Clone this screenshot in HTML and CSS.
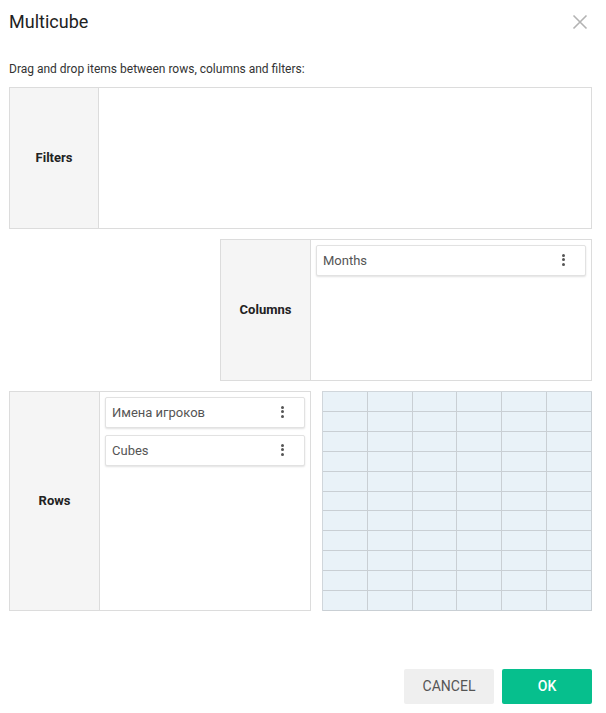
FILE: index.html
```html
<!DOCTYPE html>
<html>
<head>
<meta charset="utf-8">
<link rel="stylesheet" href="styles.css">
</head>
<body>
<div class="dialog">
  <div class="header">
    <h1 class="title">Multicube</h1>
    <svg class="close" width="16" height="16" viewBox="0 0 16 16"><path d="M1.5 1.5 L14.5 14.5 M14.5 1.5 L1.5 14.5" stroke="#b3b3b3" stroke-width="1.6" fill="none"/></svg>
  </div>
  <p class="hint">Drag and drop items between rows, columns and filters:</p>
  <div class="zone filters">
    <div class="label">Filters</div>
    <div class="items"></div>
  </div>
  <div class="mid">
    <div class="zone columns">
      <div class="label">Columns</div>
      <div class="items">
        <div class="chip"><span>Months</span><span class="dots"><i></i><i></i><i></i></span></div>
      </div>
    </div>
  </div>
  <div class="bottom">
    <div class="zone rows">
      <div class="label">Rows</div>
      <div class="items">
        <div class="chip"><span>Имена игроков</span><span class="dots"><i></i><i></i><i></i></span></div>
        <div class="chip"><span>Cubes</span><span class="dots"><i></i><i></i><i></i></span></div>
      </div>
    </div>
    <div class="grid">
      <div></div><div></div><div></div><div></div><div></div><div></div>
      <div></div><div></div><div></div><div></div><div></div><div></div>
      <div></div><div></div><div></div><div></div><div></div><div></div>
      <div></div><div></div><div></div><div></div><div></div><div></div>
      <div></div><div></div><div></div><div></div><div></div><div></div>
      <div></div><div></div><div></div><div></div><div></div><div></div>
      <div></div><div></div><div></div><div></div><div></div><div></div>
      <div></div><div></div><div></div><div></div><div></div><div></div>
      <div></div><div></div><div></div><div></div><div></div><div></div>
      <div></div><div></div><div></div><div></div><div></div><div></div>
      <div></div><div></div><div></div><div></div><div></div><div></div>
    </div>
  </div>
  <div class="footer">
    <button class="btn cancel">CANCEL</button>
    <button class="btn ok">OK</button>
  </div>
</div>
</body>
</html>
```
FILE: styles.css
```css
* { box-sizing: border-box; }
html, body { margin: 0; padding: 0; background: #fff; }
body { font-family: Roboto, "Noto Sans", sans-serif; color: #222; }
.dialog { width: 606px; height: 713px; padding: 0 14px 0 9px; position: relative; }
.header { display: flex; justify-content: space-between; align-items: center; height: 42px; padding-top: 1px; }
.title { margin: 0; font-size: 18px; font-weight: 400; color: #222; }
.close { margin-right: 4px; margin-top: 0; }
.hint { margin: 20px 0 0; font-size: 12px; line-height: 15px; color: #333; height: 25px; }
.zone { display: flex; border: 1px solid #dcdcdc; background: #fff; }
.label { width: 89px; flex: none; background: #f5f5f5; border-right: 1px solid #dcdcdc; display: flex; align-items: center; justify-content: center; font-size: 13px; font-weight: 700; color: #222; padding-bottom: 1px; }
.items { flex: 1; padding: 5px; display: flex; flex-direction: column; gap: 7px; }
.filters { height: 142px; }
.mid { display: flex; justify-content: flex-end; margin-top: 10px; }
.columns { width: 372px; height: 142px; }
.columns .label { width: 90px; }
.bottom { display: flex; justify-content: space-between; margin-top: 10px; }
.rows { width: 302px; height: 220px; }
.rows .label { width: 90px; }
.chip { height: 31px; border: 1px solid #e2e2e2; border-radius: 2px; box-shadow: 0 1px 2px rgba(0,0,0,0.12); display: flex; align-items: center; justify-content: space-between; padding: 0 20px 0 6px; font-size: 13px; color: #555; background: #fff; }
.chip span:first-child { margin-top: -1px; }
.dots { display: flex; flex-direction: column; gap: 1.5px; margin-top: -2px; }
.dots i { display: block; width: 3px; height: 3px; border-radius: 50%; background: #555; }
.grid { width: 270px; height: 220px; display: grid; grid-template-columns: repeat(6, 1fr); grid-template-rows: repeat(11, 1fr); background: #e9f2f8; border-left: 1px solid #d0d6db; border-top: 1px solid #d0d6db; }
.grid div { border-right: 1px solid #c9cfd4; border-bottom: 1px solid #c9cfd4; }
.footer { position: absolute; right: 14px; top: 669px; display: flex; gap: 8px; }
.btn { width: 90px; height: 35px; border: none; border-radius: 2px; font-family: Roboto, sans-serif; font-size: 14px; cursor: pointer; padding-bottom: 2px; }
.cancel { background: #efefef; color: #555; }
.ok { background: #06bf8d; color: #fff; font-weight: 500; }
```
